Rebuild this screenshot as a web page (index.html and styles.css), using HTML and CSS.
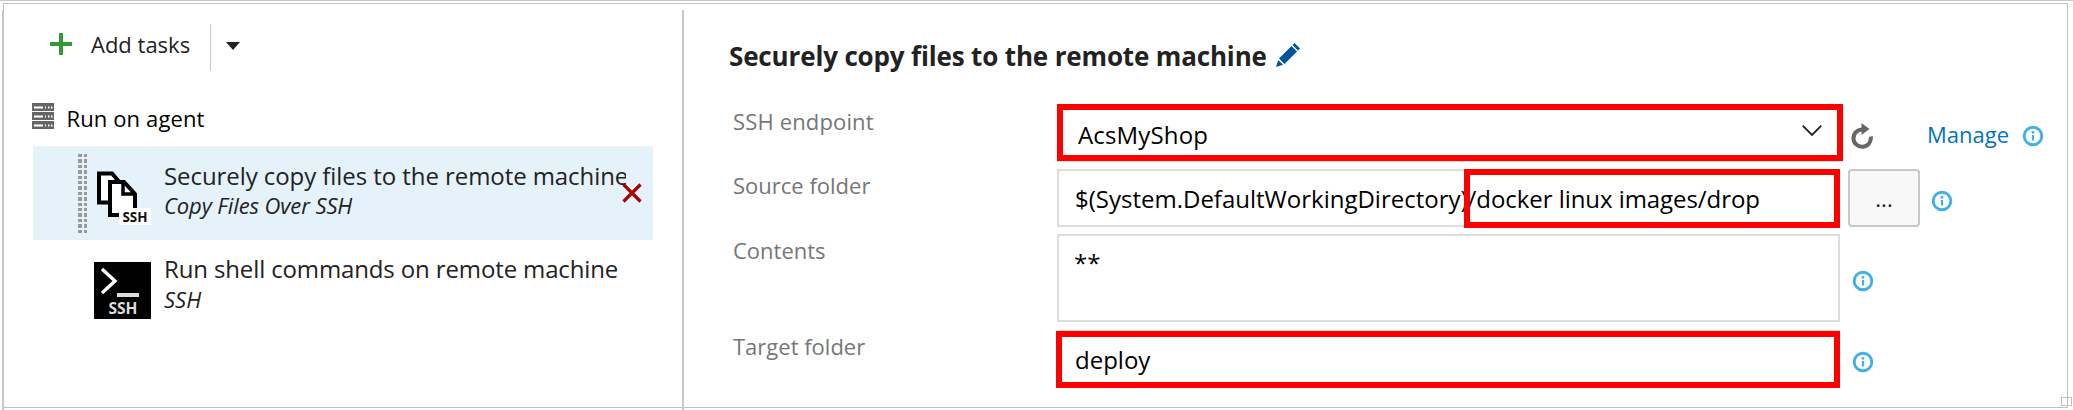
FILE: index.html
```html
<!DOCTYPE html>
<html lang="en">
<head>
<meta charset="utf-8">
<title>Release tasks</title>
<link rel="stylesheet" href="styles.css">
</head>
<body>
<svg class="defs" width="0" height="0"><symbol id="info" viewBox="0 0 22 22"><circle cx="11" cy="11" r="8.800" fill="none" stroke="#41b0e4" stroke-width="2.900"/><circle cx="11" cy="7.300" r="1.400" fill="#41b0e4"/><path d="M11 10v5.500" stroke="#41b0e4" stroke-width="2.200"/></symbol></svg>
<main class="frame">
  <aside class="tasks">
    <div class="toolbar">
      <svg class="plus" viewBox="0 0 22 22"><path d="M11 0v22M0 11h22" stroke="#339933" stroke-width="4"/></svg>
      <span class="add">Add tasks</span>
      <span class="more"><svg class="caret" viewBox="0 0 14 8"><path d="M0 0h14L7 8z" fill="#222"/></svg></span>
    </div>
    <div class="agent">
      <svg class="server" viewBox="0 0 22 26"><g fill="#666"><path d="M0 0h22v8H0zM0 9h22v8H0zM0 18h22v8H0z"/></g><path d="M2 4.500h9M2 13.500h9M2 22.500h9M13 4.500h1M16 4.500h1.500M19 4.500h1.500M13 13.500h1M16 13.500h1.500M19 13.500h1.500M13 22.500h1M16 22.500h1.500M19 22.500h1.500" stroke="#fff" stroke-width="2"/></svg>
      <span class="agent-name">Run on agent</span>
    </div>
    <div class="task selected">
      <span class="grip"></span>
      <svg class="icon" viewBox="0 0 57 57"><path d="M5 5.500h13l6 7v22H5z" fill="#fff" stroke="#000" stroke-width="4"/><path d="M16 14h14l11 12v21H16z" fill="#fff" stroke="#000" stroke-width="4"/><path d="M29 14v12h12" fill="none" stroke="#000" stroke-width="3.500"/><path d="M25 40h32v18H25z" fill="#fff"/><text x="28.500" y="54" textLength="25" lengthAdjust="spacingAndGlyphs" class="tag">SSH</text></svg>
      <div class="words"><div class="name copy-name">Securely copy files to the remote machine</div><div class="kind copy-kind">Copy Files Over SSH</div></div>
      <svg class="remove" viewBox="0 0 20 20"><path d="M1.500 1.500l17 17M18.500 1.500l-17 17" stroke="#a80000" stroke-width="3.200"/></svg>
    </div>
    <div class="task">
      <span class="grip off"></span>
      <svg class="icon" viewBox="0 0 57 57"><path d="M0 0h57v57H0z"/><path d="M8 7l13 12L8 31" fill="none" stroke="#fff" stroke-width="3.400"/><path d="M23 33h22" stroke="#ddd" stroke-width="4"/><text x="14.500" y="51.500" textLength="29" lengthAdjust="spacingAndGlyphs" class="tag light">SSH</text></svg>
      <div class="words"><div class="name shell-name">Run shell commands on remote machine</div><div class="kind">SSH</div></div>
    </div>
  </aside>
  <section class="details">
    <h1 class="title"><span>Securely copy files to the remote machine</span>
      <svg class="pencil" viewBox="0 0 24 24"><g fill="#00539c"><path d="M3 15.500L15.500 3l5.500 5.500L8.500 21z"/><path d="M2.200 17L7 21.800 0 24z"/><path d="M16.500 2l2-2L24 5.500l-2 2z"/></g></svg></h1>
    <div class="row">
      <label class="label endpoint-label">SSH endpoint</label>
      <div class="field select"><span class="endpoint">AcsMyShop</span><svg class="chevron" viewBox="0 0 20 11"><path d="M.7.7L10 10 19.300.7" fill="none" stroke="#222" stroke-width="1.800"/></svg></div>
      <svg class="refresh" viewBox="0 0 22 26"><path d="M12 6.500A8.700 8.700 0 1 0 19.700 13.500" fill="none" stroke="#666" stroke-width="4"/><path d="M10.500 0l8 6-8 6z" fill="#666"/></svg>
      <a class="manage">Manage</a>
      <svg class="info info-link"><use href="#info"/></svg>
    </div>
    <div class="row">
      <label class="label">Source folder</label>
      <div class="field source"><span>$(System.DefaultWorkingDirectory)</span><span class="path">/docker linux images/drop</span><span class="mark"></span></div>
      <button class="browse">...</button>
      <svg class="info info-browse"><use href="#info"/></svg>
    </div>
    <div class="row tall">
      <label class="label">Contents</label>
      <div class="field area">**</div>
      <svg class="info info-area"><use href="#info"/></svg>
    </div>
    <div class="row last">
      <label class="label">Target folder</label>
      <div class="field target">deploy<span class="mark"></span></div>
      <svg class="info info-area"><use href="#info"/></svg>
    </div>
  </section>
  <span class="corner"></span>
</main>
</body>
</html>
```
FILE: styles.css
```css
* { box-sizing: border-box; }
body { margin: 0; width: 2073px; height: 410px; overflow: hidden; background: #fff; border-top: 1px solid #c8c8c8; font-family: "Open Sans", "Noto Sans", sans-serif; font-size: 22px; color: #222; }
.defs { position: absolute; }
svg { display: block; flex: none; }
.frame { position: relative; display: flex; height: 405px; margin: 2px 5px 0 3px; border: 1px solid #c1c1c1; white-space: nowrap; }

/* Task list */
.tasks { flex: none; width: 682px; height: 400px; margin: 6px 0 0 -2px; padding-top: 14px; border: solid #c8c8c8; border-width: 0 2px; }
.toolbar { display: flex; height: 47px; padding-left: 46px; }
.plus { width: 22px; height: 22px; margin-top: 9px; }
.add { margin-left: 19px; line-height: 40px; }
.more { margin-left: auto; margin-right: 440px; width: 32px; padding: 18px 0 0 15px; border-left: 1px solid #c8c8c8; }
.caret { width: 14px; height: 8px; }
.agent { display: flex; height: 75px; padding: 32px 0 0 28px; color: #000; line-height: 32px; }
.server { width: 22px; height: 26px; }
.agent-name { margin: -1px 0 0 12.500px; letter-spacing: .12px; }
.task { display: flex; width: 620px; height: 94px; margin-left: 29px; }
.selected { background: #e5f2fa; }
.grip { flex: none; width: 9px; height: 80px; margin: 8px 0 0 45px; background: repeating-linear-gradient(to bottom, transparent 0 3.300px, #e5f2fa 3.300px 5.400px), linear-gradient(to right, #999 0 4px, transparent 4px 5.500px, #999 5.500px 9px); }
.off { visibility: hidden; }
.icon { width: 57px; height: 57px; margin: 22px 0 0 7px; }
.tag { font: bold 15px "Open Sans", sans-serif; fill: #111; }
.light { fill: #ddd; font-size: 16px; }
.words { width: 462px; margin-left: 13px; padding-top: 13px; overflow: hidden; }
.name { font-size: 24px; line-height: 32px; }
.copy-name { height: 32px; line-height: 34px; letter-spacing: -.07px; }
.shell-name { letter-spacing: -.13px; }
.kind { font-size: 22px; line-height: 28px; font-style: italic; }
.copy-kind { letter-spacing: -.1px; }
.remove { width: 20px; height: 20px; margin: 37px 0 0 -4px; }

/* Task form */
.details { flex: 1; padding: 34px 0 0 46px; }
.title { display: flex; margin: 0 0 0 -1px; height: 66px; font-size: 26px; line-height: 37px; font-weight: 700; letter-spacing: -.155px; }
.pencil { width: 24px; height: 24px; margin: 5px 0 0 9px; }
.row { display: flex; height: 58px; margin-bottom: 7px; }
.label { flex: none; width: 327px; padding-left: 3px; line-height: 32px; color: #767676; }
.endpoint-label { padding-top: 1px; letter-spacing: .15px; }
.field { position: relative; flex: none; width: 783px; border: 2px solid #ddd; padding-left: 16px; font-size: 24px; line-height: 55px; color: #000; }
.select { display: flex; width: 786px; height: 57px; padding-left: 15px; border: 6px solid #f00; line-height: 49px; box-shadow: 0 1px #ddd; }
.endpoint { letter-spacing: .15px; }
.path { letter-spacing: -.06px; }
.chevron { width: 20px; height: 11px; margin: 15px 15px 0 auto; }
.refresh { width: 22px; height: 26px; margin: 19px 0 0 8px; }
.manage { width: 83px; margin-left: 54px; line-height: 61px; color: #0072c6; }
.info { width: 22px; height: 22px; }
.info-link { margin: 21px 0 0 12px; }
.info-browse { margin: 21px 0 0 11px; }
.info-area { margin: 36px 0 0 11.500px; }
.mark { position: absolute; border: 6px solid #f00; }
.source .mark { left: 405px; top: -2px; width: 376px; height: 59px; }
.browse { width: 72px; margin-left: 8px; padding: 0; border: 2px solid #c8c8c8; border-radius: 4px; background: #f8f8f8; font: 22px "Open Sans", sans-serif; color: #222; }
.tall { height: 88px; margin-bottom: 8px; }
.area { line-height: 54px; padding-left: 15px; }
.target .mark { left: -3px; top: -1px; width: 784px; height: 57px; }
.last .info-area { margin-top: 21px; }
.corner { position: absolute; right: -5px; bottom: 1px; width: 11px; height: 9px; border: 1px solid #c1c1c1; }
```
